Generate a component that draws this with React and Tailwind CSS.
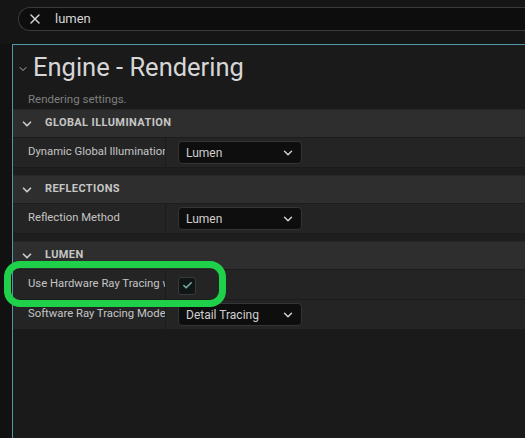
import { ChevronDown, X, Check } from 'lucide-react';

const sections = [
  {
    title: 'GLOBAL ILLUMINATION',
    rows: [{ label: 'Dynamic Global Illumination Method', type: 'select', value: 'Lumen' }],
  },
  {
    title: 'REFLECTIONS',
    rows: [{ label: 'Reflection Method', type: 'select', value: 'Lumen' }],
  },
  {
    title: 'LUMEN',
    rows: [
      { label: 'Use Hardware Ray Tracing when available', type: 'check' },
      { label: 'Software Ray Tracing Mode', type: 'select', value: 'Detail Tracing' },
    ],
  },
];

function Row({ row }) {
  return (
    <div className="flex h-[30px] bg-[#242424] border-b border-[#1b1b1b]">
      <div className="w-[153px] shrink-0 flex items-center pl-[15px] overflow-hidden whitespace-nowrap border-r border-[#1b1b1b] text-[11.3px] text-[#c4c4c4]">
        {row.label}
      </div>
      <div className="flex items-center pl-[12px]">
        {row.type === 'select' ? (
          <div className="w-[124px] h-[23px] rounded-[4px] bg-[#0e0e0e] border border-[#353535] flex items-center justify-between pl-[7px] pr-[6px] text-[12px] text-[#cfcfcf]">
            <span>{row.value}</span>
            <ChevronDown size={14} strokeWidth={2.5} className="text-[#d0d0d0]" />
          </div>
        ) : (
          <div className="w-[18px] h-[18px] mt-[2px] rounded-[3px] bg-[#101515] border border-[#3a3a3a] flex items-center justify-center">
            <Check size={11} strokeWidth={3.5} className="text-[#78aba3]" />
          </div>
        )}
      </div>
    </div>
  );
}

export default function App() {
  return (
    <div className="relative w-[525px] h-[438px] overflow-hidden bg-[#151515] font-['Roboto','Liberation_Sans',sans-serif]">
      {/* search */}
      <div className="h-[44px] pl-[18px] pt-[7px]">
        <div className="h-[24px] rounded-l-full border border-r-0 border-[#3a3a3a] bg-[#0d0d0d] flex items-center pl-[8px] gap-[12px]">
          <X size={16} strokeWidth={2.2} className="text-[#d2d2d2]" />
          <span className="text-[13px] text-[#d4d4d4]">lumen</span>
        </div>
      </div>

      <div className="flex h-[394px]">
        <div className="w-[12px] bg-[#111111]" />
        <div className="flex-1 border-l border-t border-[#4f98a6] bg-[#1a1a1a]">
          {/* title */}
          <div className="h-[64px] pt-[5px]">
            <div className="flex items-center">
              <ChevronDown size={12} strokeWidth={2} className="ml-[4px] mt-[4px] text-[#b0b0b0]" />
              <span className="ml-[4px] text-[25.5px] text-[#d6d6d6] leading-[34px]">Engine - Rendering</span>
            </div>
            <div className="pl-[15px] mt-[7px] text-[11.5px] text-[#7f7f7f]">Rendering settings.</div>
          </div>

          {sections.map((s, i) => (
            <div key={s.title} className={i > 0 ? 'border-t-[7px] border-[#1e1e1e]' : ''}>
              <div className="h-[29px] bg-[#2e2e2e] border-t border-[#262626] border-b border-b-[#1c1c1c] flex items-center">
                <ChevronDown size={14} strokeWidth={3} className="ml-[7px] text-[#c8c8c8]" />
                <span className="ml-[11px] text-[11px] font-bold text-[#c6c6c6] tracking-[0.4px]">{s.title}</span>
              </div>
              {s.rows.map((r) => (
                <Row key={r.label} row={r} />
              ))}
            </div>
          ))}
        </div>
      </div>

      {/* highlight */}
      <div className="absolute left-[4px] top-[261px] w-[222px] h-[46px] rounded-[16px] border-[7px] border-[#1fd04b]" />
    </div>
  );
}
